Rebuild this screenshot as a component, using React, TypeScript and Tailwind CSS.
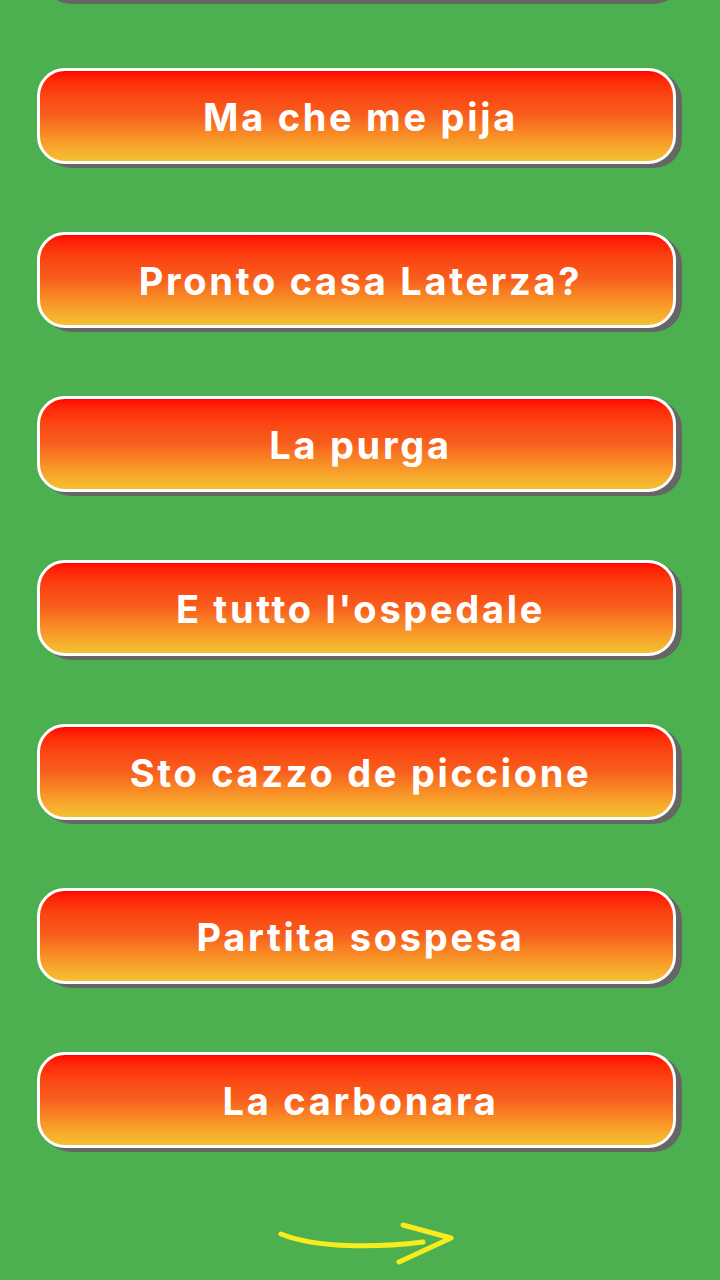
import React from "react";

const labels = [
  "",
  "Ma che me pija",
  "Pronto casa Laterza?",
  "La purga",
  "E tutto l'ospedale",
  "Sto cazzo de piccione",
  "Partita sospesa",
  "La carbonara",
];

function SoundButton({ label }: { label: string }) {
  return (
    <div className="relative w-[639px] h-[96px] ml-[37px] shrink-0">
      <div className="absolute left-[6px] top-[4px] w-[639px] h-[96px] rounded-[28px] bg-[#666666]" />
      <div className="relative w-full h-full rounded-[28px] border-[3px] border-white bg-linear-to-b from-[#ff0000] via-[#f75f1d] to-[#f3c232] flex items-center justify-center pl-[8px]">
        <span
          className="text-white font-bold text-[38px] leading-none tracking-[2.7px] pt-[2px]"
          style={{ fontFamily: "Inter, 'Open Sans', sans-serif" }}
        >
          {label}
        </span>
      </div>
    </div>
  );
}

export default function App() {
  return (
    <div className="w-[720px] h-[1280px] overflow-hidden bg-[#4caf50] relative">
      <div className="flex flex-col gap-[68px] -mt-[96px]">
        {labels.map((l, i) => (
          <SoundButton key={i} label={l} />
        ))}
      </div>
      <div className="flex justify-center mt-[74px] pl-[20px]">
        <svg width="190" height="50" viewBox="0 0 190 50" className="block">
          <path
            d="M6 12 C 40 26, 100 26, 148 20"
            fill="none"
            stroke="#f7ec1c"
            strokeWidth="5"
            strokeLinecap="round"
          />
          <path
            d="M128 3 L 176 16 L 124 40"
            fill="none"
            stroke="#f7ec1c"
            strokeWidth="5"
            strokeLinecap="round"
            strokeLinejoin="round"
          />
        </svg>
      </div>
    </div>
  );
}
